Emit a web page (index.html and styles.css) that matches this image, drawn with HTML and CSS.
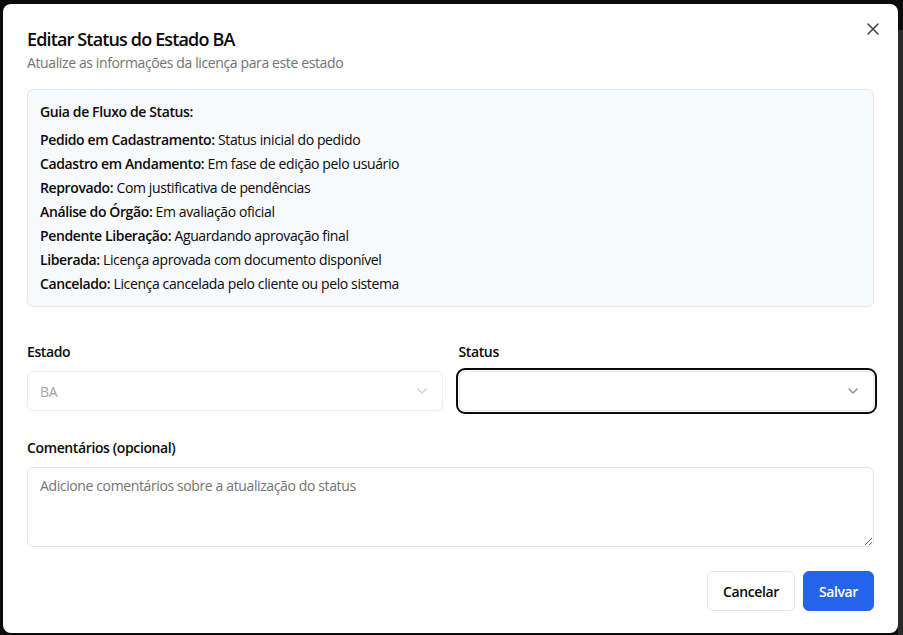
FILE: index.html
```html
<!DOCTYPE html>
<html lang="pt-BR">
<head>
<meta charset="utf-8">
<title>Editar Status do Estado BA</title>
<link rel="stylesheet" href="styles.css">
</head>
<body>
<div class="overlay">
  <div class="dialog" role="dialog">
    <button class="close" aria-label="Fechar">
      <svg width="20" height="20" viewBox="0 0 24 24" fill="none" stroke="currentColor" stroke-width="1.8" stroke-linecap="round"><path d="M18 6 6 18M6 6l12 12"/></svg>
    </button>
    <header class="head">
      <h2 class="title">Editar Status do Estado BA</h2>
      <p class="desc">Atualize as informações da licença para este estado</p>
    </header>

    <div class="guide">
      <p class="guide-title">Guia de Fluxo de Status:</p>
      <ul class="guide-list">
        <li><b>Pedido em Cadastramento:</b> Status inicial do pedido</li>
        <li><b>Cadastro em Andamento:</b> Em fase de edição pelo usuário</li>
        <li><b>Reprovado:</b> Com justificativa de pendências</li>
        <li><b>Análise do Órgão:</b> Em avaliação oficial</li>
        <li><b>Pendente Liberação:</b> Aguardando aprovação final</li>
        <li><b>Liberada:</b> Licença aprovada com documento disponível</li>
        <li><b>Cancelado:</b> Licença cancelada pelo cliente ou pelo sistema</li>
      </ul>
    </div>

    <div class="row">
      <div class="field">
        <label class="label">Estado</label>
        <div class="select disabled">
          <span>BA</span>
          <svg class="chev" width="16" height="16" viewBox="0 0 24 24" fill="none" stroke="currentColor" stroke-width="2" stroke-linecap="round" stroke-linejoin="round"><path d="m6 9 6 6 6-6"/></svg>
        </div>
      </div>
      <div class="field">
        <label class="label">Status</label>
        <div class="select focus">
          <span></span>
          <svg class="chev" width="16" height="16" viewBox="0 0 24 24" fill="none" stroke="currentColor" stroke-width="2" stroke-linecap="round" stroke-linejoin="round"><path d="m6 9 6 6 6-6"/></svg>
        </div>
      </div>
    </div>

    <div class="field comments">
      <label class="label">Comentários (opcional)</label>
      <textarea class="textarea" placeholder="Adicione comentários sobre a atualização do status"></textarea>
    </div>

    <div class="footer">
      <button class="btn outline">Cancelar</button>
      <button class="btn primary">Salvar</button>
    </div>
  </div>
</div>
</body>
</html>
```
FILE: styles.css
```css
* { box-sizing: border-box; }
html, body { margin: 0; height: 100%; }
body {
  font-family: "Open Sans", "Noto Sans", sans-serif;
  letter-spacing: -0.38px;
  color: #0a0a0a;
  background:
    linear-gradient(#0b0b0b, #0b0b0b) right top / 5px 30px no-repeat,
    linear-gradient(#2a2a2a, #2a2a2a) right top / 5px 100% no-repeat,
    #0b0b0b;
  overflow: hidden;
}
.overlay {
  height: 100%;
  padding: 4px 5px 2px 3px;
  display: flex;
}
.dialog {
  position: relative;
  flex: 1;
  background: #fff;
  border-radius: 8px;
  padding: 24px 24px 22px;
  display: flex;
  flex-direction: column;
}
.close {
  position: absolute;
  top: 15px;
  right: 15px;
  border: 0;
  background: none;
  padding: 0;
  color: #3f3f3f;
  display: flex;
  cursor: pointer;
}
.head { margin-bottom: 16px; }
.title {
  margin: 0;
  font-size: 18px;
  line-height: 22px;
  font-weight: 600;
  letter-spacing: -0.85px;
}
.desc {
  margin: 3px 0 0;
  font-size: 14px;
  line-height: 20px;
  color: #737373;
}
.guide {
  border: 1px solid #e5e7eb;
  background: #f8f9fb;
  border-radius: 6px;
  padding: 12px;
  font-size: 14px;
  line-height: 20px;
}
.guide-title { margin: 0 0 8px; font-weight: 600; }
.guide-list { list-style: none; margin: 0; padding: 0; display: flex; flex-direction: column; gap: 4px; }
.guide-list b { font-weight: 600; }
.row {
  margin-top: 35px;
  display: grid;
  grid-template-columns: 1fr 1fr;
  gap: 16px;
}
.field { display: flex; flex-direction: column; gap: 9px; }
.label { font-size: 14px; line-height: 20px; font-weight: 600; }
.select {
  height: 40px;
  border: 1px solid #e8e8e8;
  border-radius: 6px;
  padding: 0 12px;
  display: flex;
  align-items: center;
  justify-content: space-between;
  font-size: 14px;
  background: #fff;
}
.select.disabled { color: #a3a3a3; border-color: #ededed; }
.select.disabled .chev { color: #d0d0d0; }
.select.focus { box-shadow: 0 0 0 1px #fff, 0 0 0 3px #0a0a0a; }
.chev { color: #8a8a8a; }
.comments { margin-top: 27px; }
.textarea {
  height: 80px;
  border: 1px solid #e5e5e5;
  border-radius: 6px;
  padding: 8px 12px;
  font: inherit;
  font-size: 14px;
  line-height: 20px;
  letter-spacing: -0.38px;
  resize: vertical;
}
.textarea::placeholder { color: #737373; }
.footer {
  margin-top: 24px;
  display: flex;
  justify-content: flex-end;
  gap: 8px;
}
.btn {
  height: 40px;
  padding: 0 15px;
  border-radius: 6px;
  font: inherit;
  font-size: 14px;
  font-weight: 600;
  letter-spacing: -0.38px;
  cursor: pointer;
}
.btn.outline { background: #fff; border: 1px solid #e5e5e5; color: #0a0a0a; }
.btn.primary { background: #2563eb; border: 1px solid #2563eb; color: #fff; }
```
